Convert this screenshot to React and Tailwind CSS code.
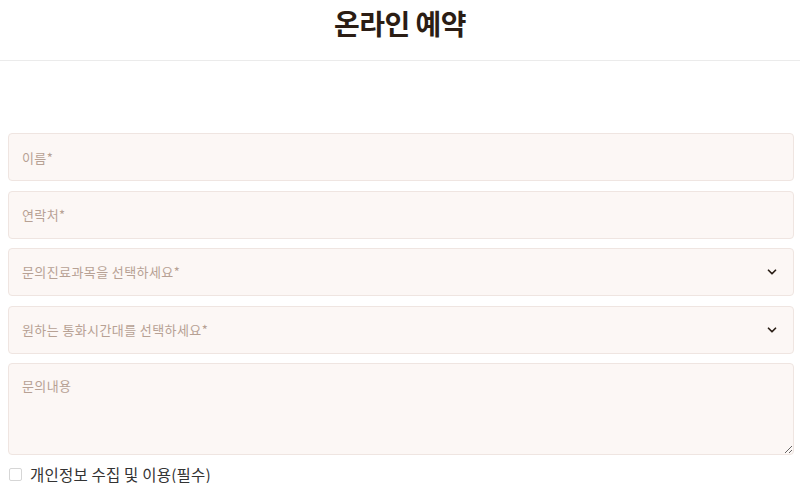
import { ChevronDown } from 'lucide-react'

const field = 'block w-full h-[48px] rounded-[4px] border border-[#efe5e1] bg-[#fcf7f5] px-[13px] text-[13px] tracking-[0.4px] text-[#5a4638] placeholder-[#b7a194] outline-none'

function Select({ label }) {
  return (
    <div className="relative">
      <select
        defaultValue=""
        className={field + ' appearance-none text-[#b7a194]'}
      >
        <option value="" disabled>{label}</option>
      </select>
      <ChevronDown
        className="absolute right-[15px] top-1/2 -translate-y-1/2 w-[14px] h-[14px] text-[#2b1f17] pointer-events-none"
        strokeWidth={3}
      />
    </div>
  )
}

export default function App() {
  return (
    <div className="w-[800px] min-h-[483px] bg-white font-['Noto_Sans_CJK_KR',sans-serif]">
      {/* Header */}
      <header className="h-[61px] border-b border-[#ebebeb] flex items-center justify-center pb-[14px]">
        <h1 className="text-[28px] font-bold text-[#2b1d14] tracking-[-0.5px] leading-none">온라인 예약</h1>
      </header>

      {/* Form */}
      <form className="pl-[8px] pr-[6px] pt-[72px] flex flex-col">
        <div className="flex flex-col gap-[9.6px]">
          <input className={field} placeholder="이름*" />
          <input className={field} placeholder="연락처*" />
          <Select label="문의진료과목을 선택하세요*" />
          <Select label="원하는 통화시간대를 선택하세요*" />
          <textarea
            className="block w-full h-[92px] rounded-[4px] border border-[#efe5e1] bg-[#fcf7f5] px-[13px] pt-[12px] text-[13px] tracking-[0.4px] text-[#5a4638] placeholder-[#b7a194] outline-none"
            placeholder="문의내용"
          />
        </div>

        <label className="mt-[10px] flex items-center gap-[8px] pl-[1px]">
          <span className="w-[13px] h-[13px] rounded-[2px] border border-[#d6d6d6] bg-white" />
          <span className="text-[15.5px] tracking-[0.2px] text-[#333333] leading-[18px]">개인정보 수집 및 이용(필수)</span>
        </label>
      </form>
    </div>
  )
}
